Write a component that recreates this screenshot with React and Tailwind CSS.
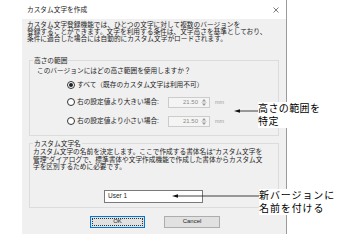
export default function App() {
  const Radio = ({ checked }) => (
    <span className="flex h-[8px] w-[8px] items-center justify-center rounded-full border border-[#333] bg-white">
      {checked && <span className="h-[4px] w-[4px] rounded-full bg-[#222]" />}
    </span>
  );

  const Spinner = () => (
    <div className="flex items-center">
      <div className="flex h-[11px] w-[42px] items-center border border-[#cccccc] bg-[#f4f4f4]">
        <span className="flex-1 pr-[2px] text-right text-[6px] leading-[9px] text-[#8a8a8a]">21.50</span>
        <svg width="8" height="9" viewBox="0 0 8 9" className="mr-[1px]">
          <path d="M4 1 L6 3.5 L2 3.5 Z" fill="#9a9a9a" />
          <line x1="1" y1="4.5" x2="7" y2="4.5" stroke="#c8c8c8" strokeWidth="0.6" />
          <path d="M4 8 L6 5.5 L2 5.5 Z" fill="#9a9a9a" />
        </svg>
      </div>
      <span className="ml-[5px] text-[5.5px] text-[#a0a0a0]">mm</span>
    </div>
  );

  return (
    <div className="relative h-[252px] w-[346px] overflow-hidden bg-white font-['Liberation_Sans','Noto_Sans_CJK_JP',sans-serif] text-[#1e1e1e]">
      <div className="ml-[22px] w-[265px] border-r border-[#9a9a9a]">
        {/* title bar */}
        <div className="flex h-[19px] items-center justify-between bg-white pl-[5px] pr-[7px]">
          <span className="text-[6.7px] leading-[7px]">カスタム文字を作成</span>
          <svg width="6" height="6" viewBox="0 0 6 6">
            <path d="M0.5 0.5 L5.5 5.5 M5.5 0.5 L0.5 5.5" stroke="#444" strokeWidth="0.7" />
          </svg>
        </div>

        <div className="bg-[#f0f0f0] pb-[6px] pt-[2px]">
          <p className="whitespace-nowrap px-[5px] text-[6.7px] leading-[7px]">
            カスタム文字登録機能では、ひとつの文字に対して複数のバージョンを
            <br />
            登録することができます。文字を利用する条件は、文字高さを基準としており、
            <br />
            条件に適合した場合には自動的にカスタム文字がロードされます。
          </p>

          {/* height range */}
          <fieldset className="mx-[7px] mt-[15px] border border-[#dcdcdc] pb-[8px]">
            <legend className="ml-[3px] px-[1px] text-[6.7px] leading-[7px]">高さの範囲</legend>
            <div className="mt-[3px] pl-[7px] text-[6.7px] leading-[7px]">このバージョンにはどの高さ範囲を使用しますか？</div>
            <div className="mt-[5px] flex h-[12px] items-center pl-[37px] text-[6.7px]">
              <Radio checked />
              <span className="ml-[2px]">すべて（既存のカスタム文字は利用不可）</span>
            </div>
            <div className="mt-[5px] flex h-[12px] items-center pl-[37px] text-[6.7px]">
              <Radio />
              <span className="ml-[2px] w-[91px]">右の設定値より大きい場合:</span>
              <Spinner />
            </div>
            <div className="mt-[7px] flex h-[12px] items-center pl-[37px] text-[6.7px]">
              <Radio />
              <span className="ml-[2px] w-[91px]">右の設定値より小さい場合:</span>
              <Spinner />
            </div>
          </fieldset>

          {/* custom name */}
          <fieldset className="mx-[7px] mt-[4px] border border-[#dcdcdc] pb-[4px]">
            <legend className="ml-[3px] px-[1px] text-[6.7px] leading-[7px]">カスタム文字名</legend>
            <p className="mt-[1px] whitespace-nowrap pl-[3px] text-[6.7px] leading-[7.5px]">
              カスタム文字の名前を決定します。ここで作成する書体名は"カスタム文字を
              <br />
              管理"ダイアログで、標準書体や文字作成機能で作成した書体からカスタム文
              <br />
              字を区別するために必要です。
            </p>
            <div className="ml-[74px] mt-[19px] flex h-[13px] w-[99px] items-center border border-[#7a7a7a] bg-white pl-[3px] text-[6.5px]">
              User 1
            </div>
          </fieldset>

          <div className="mt-[8px] flex gap-[19px] pl-[68px]">
            <button className="flex h-[12px] w-[55px] items-center justify-center border border-[#0078d7] bg-[#e1e1e1] p-[1px]">
              <span className="flex h-full w-full items-center justify-center border border-dotted border-[#333] text-[6px]">OK</span>
            </button>
            <button className="flex h-[12px] w-[56px] items-center justify-center border border-[#adadad] bg-[#e1e1e1] text-[6px]">
              Cancel
            </button>
          </div>
        </div>
      </div>

      {/* callout 1 */}
      <svg className="absolute left-[233px] top-[107px]" width="26" height="8" viewBox="0 0 26 8">
        <path d="M1 4 L7 2.3 L7 5.7 Z" fill="#111" />
        <line x1="5" y1="4" x2="26" y2="4" stroke="#111" strokeWidth="0.8" />
      </svg>
      <div className="absolute left-[258px] top-[102px] bg-white pr-[2px] text-[10px] leading-[13px] tracking-[0.4px] text-black">
        高さの範囲を
        <br />
        特定
      </div>

      {/* callout 2 */}
      <svg className="absolute left-[171px] top-[192px]" width="88" height="8" viewBox="0 0 88 8">
        <path d="M1 4 L7 2.3 L7 5.7 Z" fill="#111" />
        <line x1="5" y1="4" x2="88" y2="4" stroke="#111" strokeWidth="0.8" />
      </svg>
      <div className="absolute left-[259px] top-[189px] bg-white pr-[2px] text-[10px] leading-[13px] tracking-[0.9px] text-black">
        新バージョンに
        <br />
        名前を付ける
      </div>
    </div>
  );
}
